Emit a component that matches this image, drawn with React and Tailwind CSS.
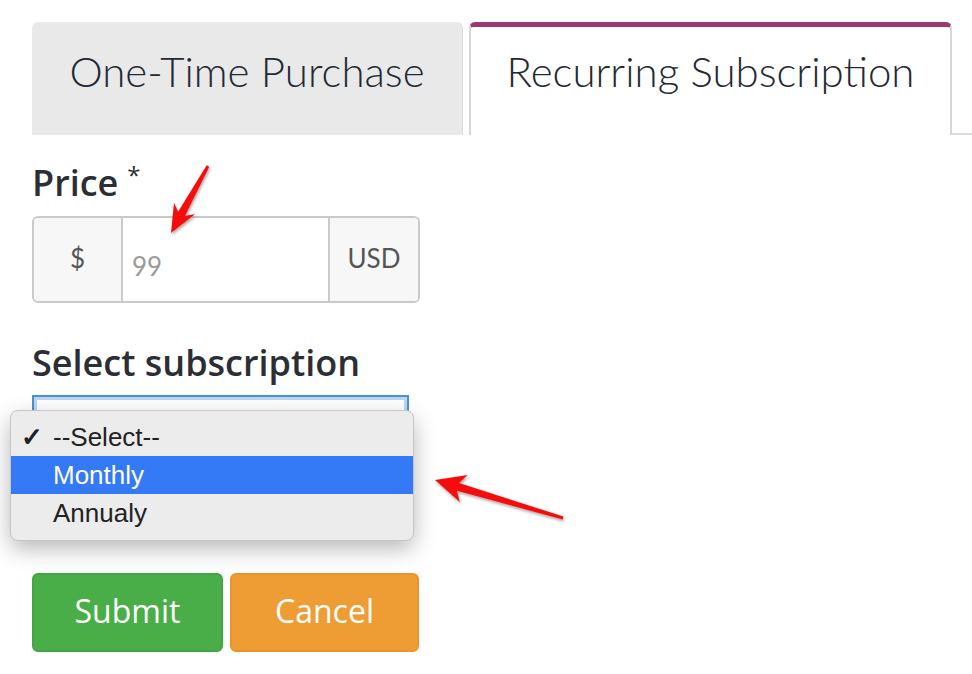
import React from "react";

const font = { fontFamily: "Lato, 'Open Sans', sans-serif" };
const wide = { fontFamily: "'Open Sans', Lato, sans-serif" };

function arrowPoints(tx, ty, px, py, headLen = 30, headHalf = 14, tailHalf = 1.5, neckHalf = 4) {
    const vx = px - tx;
    const vy = py - ty;
    const len = Math.hypot(vx, vy);
    const dx = vx / len;
    const dy = vy / len;
    const nx = -dy;
    const ny = dx;
    const bx = px - dx * headLen;
    const by = py - dy * headLen;
    const kx = px - dx * (headLen - 6);
    const ky = py - dy * (headLen - 6);
    const pts = [
        [tx + nx * tailHalf, ty + ny * tailHalf],
        [kx + nx * neckHalf, ky + ny * neckHalf],
        [bx + nx * headHalf, by + ny * headHalf],
        [px, py],
        [bx - nx * headHalf, by - ny * headHalf],
        [kx - nx * neckHalf, ky - ny * neckHalf],
        [tx - nx * tailHalf, ty - ny * tailHalf],
    ];
    return pts.map((p) => p.map((v) => v.toFixed(1)).join(",")).join(" ");
}

function Arrows() {
    return (
        <svg
            className="pointer-events-none absolute left-0 top-0"
            width="972"
            height="674"
            viewBox="0 0 972 674"
        >
            <defs>
                <filter id="sh" x="-20%" y="-20%" width="140%" height="140%">
                    <feDropShadow dx="1" dy="2" stdDeviation="1.5" floodColor="#000" floodOpacity="0.35" />
                </filter>
            </defs>
            <polygon points={arrowPoints(208, 166, 171, 233, 28, 12, 1.5, 4)} fill="#f50d0d" filter="url(#sh)" />
            <polygon points={arrowPoints(563, 518, 435, 480, 30, 14, 1.5, 4)} fill="#f50d0d" filter="url(#sh)" />
        </svg>
    );
}

export default function App() {
    return (
        <div className="relative h-[674px] w-[972px] overflow-hidden bg-white text-[#2b2f35]" style={font}>
            <div className="pl-8 pt-[22px]">
                {/* Tabs */}
                <div className="flex items-end">
                    <div className="flex h-[113px] w-[431px] items-start justify-center rounded-t-md border-r border-[#dcdcdc] bg-[#e9e9e9] pt-[28px] text-[42px] font-light leading-none text-[#232933]">
                        One-Time Purchase
                    </div>
                    <div className="ml-[6px] flex h-[113px] w-[483px] items-start justify-center rounded-t-md border-x-2 border-t-[5px] border-x-[#d6d6d6] border-t-[#9b3a72] bg-white pt-[23px] text-[42px] font-light leading-none text-[#232933]">
                        Recurring Subscription
                    </div>
                    <div className="h-[113px] flex-1 border-b-2 border-[#dcdcdc]" />
                </div>

                {/* Price */}
                <div className="mt-[30px] flex items-start text-[36px] font-semibold leading-none" style={wide}>
                    Price
                    <span className="ml-[9px] mt-[-2px] text-[24px] font-normal">*</span>
                </div>
                <div className="mt-[15px] flex h-[87px] w-[388px] overflow-hidden rounded-md border-2 border-[#cacaca] text-[26px] leading-none">
                    <div className="flex w-[89px] items-center justify-center border-r-2 border-[#cacaca] bg-[#f7f7f7] pb-1 text-[#555]">
                        $
                    </div>
                    <div className="flex flex-1 items-center pl-[9px] pt-[12px] text-[#9a9a9a]">99</div>
                    <div className="flex w-[90px] items-center justify-center border-l-2 border-[#cacaca] bg-[#f7f7f7] pb-1 text-[#555]">
                        USD
                    </div>
                </div>

                {/* Select */}
                <div className="mt-[42px] text-[36px] font-semibold leading-none" style={wide}>
                    Select subscription
                </div>
                <div className="relative mt-[14px] h-[50px] w-[377px]">
                    <div className="h-full w-full border-2 border-[#4f8fd6] bg-white shadow-[inset_0_0_0_3px_#bcd6f5]" />
                    <div
                        className="absolute left-[-22px] top-[15px] w-[404px] rounded-lg border border-[#c6c6c6] bg-[#ececec] pb-2 pt-[7px] shadow-[0_8px_22px_rgba(0,0,0,0.28)]"
                        style={{ fontFamily: "'Liberation Sans', Arial, sans-serif" }}
                    >
                        <div className="flex h-[38px] items-center text-[26px] text-[#222]">
                            <span className="w-[42px] pl-[10px] text-[26px] font-bold">✓</span>
                            --Select--
                        </div>
                        <div className="flex h-[38px] items-center bg-[#3479f6] pl-[42px] text-[26px] text-white">
                            Monthly
                        </div>
                        <div className="flex h-[38px] items-center pl-[42px] text-[26px] text-[#222]">
                            Annualy
                        </div>
                    </div>
                </div>

                {/* Buttons */}
                <div className="mt-[128px] flex gap-[7px] text-[32px] leading-none text-white" style={wide}>
                    <button className="flex h-[79px] w-[191px] items-center justify-center rounded-md border-2 border-[#45a545] bg-[#4aae48] pb-1">
                        Submit
                    </button>
                    <button className="flex h-[79px] w-[189px] items-center justify-center rounded-md border-2 border-[#ea942c] bg-[#ee9d35] pb-1">
                        Cancel
                    </button>
                </div>
            </div>
            <Arrows />
        </div>
    );
}
